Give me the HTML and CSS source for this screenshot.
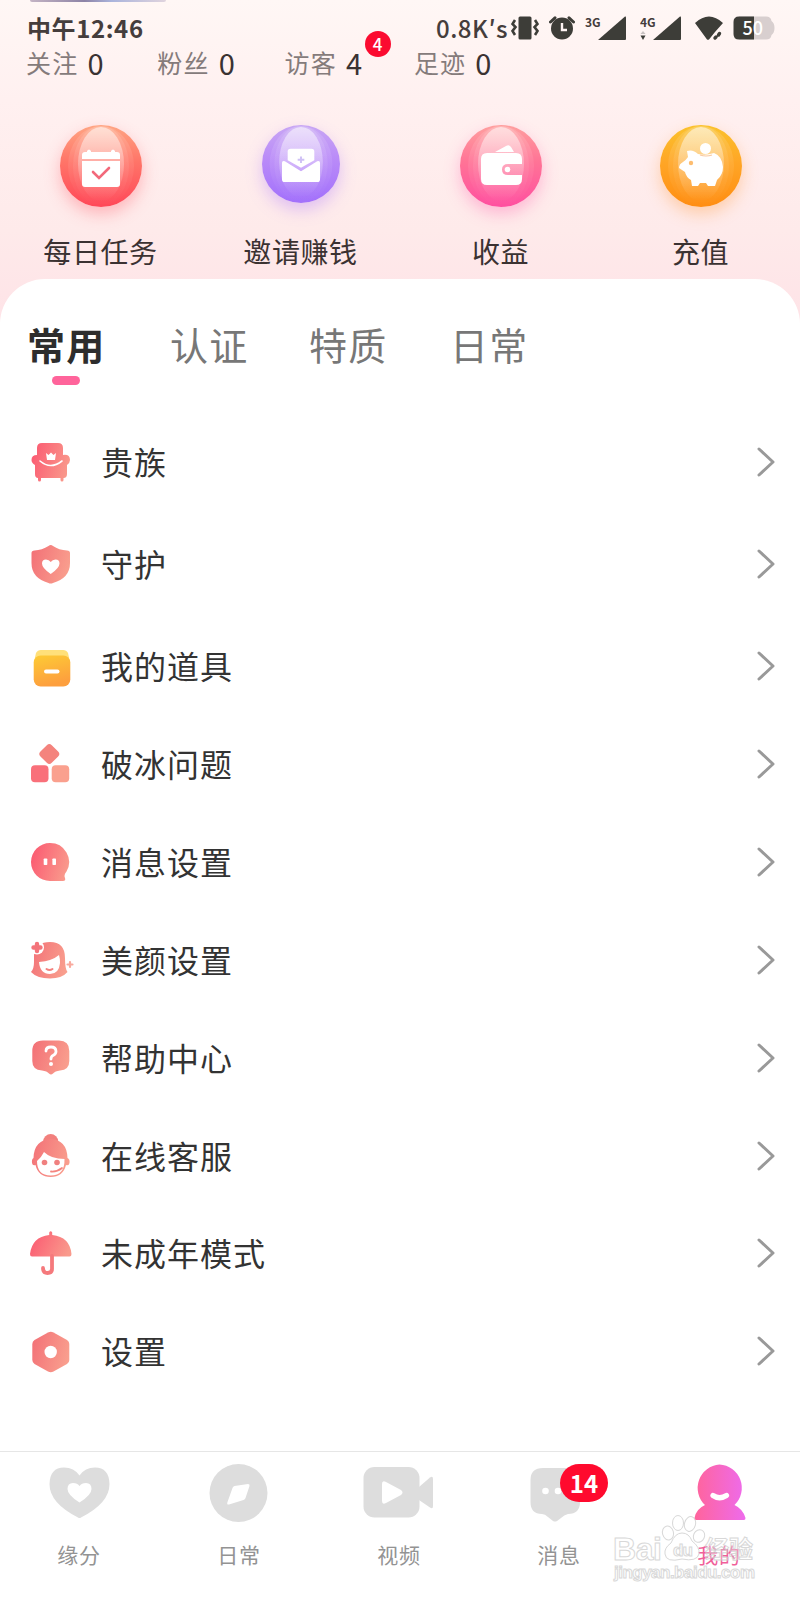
FILE: index.html
```
<!DOCTYPE html>
<html lang="zh-CN">
<head>
  <meta charset="UTF-8">
  <meta name="viewport" content="width=device-width, initial-scale=1.0">
  <title>我的</title>
  <link rel="stylesheet" href="styles.css">
</head>
<body>
  <!-- shared gradients and shapes -->
  <svg class="defs" width="0" height="0">
    <defs>
      <linearGradient id="rose" x1="0" y1="0.3" x2="1" y2="0.6">
        <stop offset="0" stop-color="#fb5b72"/>
        <stop offset="1" stop-color="#f99a8c"/>
      </linearGradient>
      <linearGradient id="coral" x1="0" y1="0.3" x2="1" y2="0.6">
        <stop offset="0" stop-color="#f37378"/>
        <stop offset="1" stop-color="#f99f8e"/>
      </linearGradient>
      <linearGradient id="gold" x1="0" y1="0" x2="0.3" y2="1">
        <stop offset="0" stop-color="#fdcb35"/>
        <stop offset="1" stop-color="#fd9f3e"/>
      </linearGradient>
      <linearGradient id="magenta" x1="0" y1="0" x2="1" y2="0">
        <stop offset="0" stop-color="#ff649b"/>
        <stop offset="1" stop-color="#ee6bec"/>
      </linearGradient>
      <linearGradient id="shine" x1="0" y1="0" x2="0" y2="1">
        <stop offset="0" stop-color="#fff" stop-opacity="0.55"/>
        <stop offset="0.5" stop-color="#fff" stop-opacity="0.28"/>
        <stop offset="1" stop-color="#fff" stop-opacity="0"/>
      </linearGradient>
      <g id="gloss">
        <ellipse cx="41" cy="41" rx="33" ry="40" fill="url(#shine)" opacity="0.25"/>
        <ellipse cx="41" cy="41" rx="28" ry="40" fill="url(#shine)" opacity="0.25"/>
        <ellipse cx="41" cy="39" rx="23" ry="37" fill="url(#shine)"/>
      </g>
    </defs>
  </svg>

  <div class="app">
    <header class="top">
      <div class="avatar-edge"></div>
      <div class="status-bar">
        <span class="time">中午12:46</span>
        <div class="status-icons">
          <span class="speed">0.8K′s</span>
          <svg class="vibrate" width="28" height="24" viewBox="0 0 28 24">
            <rect x="7.500" y="0.500" width="13" height="23" rx="1.500" fill="#3d3d38"/>
            <path d="M4 4L1.500 8L4.500 11L1.500 15L4 19M24 4L26.500 8L23.500 11L26.500 15L24 19" fill="none" stroke="#3d3d38" stroke-width="2.600"/>
          </svg>
          <svg class="alarm" width="26" height="24" viewBox="0 0 26 24">
            <circle cx="13" cy="12.500" r="11" fill="#3d3d38"/>
            <path d="M1.500 6L6 1.800M24.500 6L20 1.800" stroke="#3d3d38" stroke-width="3" stroke-linecap="round"/>
            <path d="M13 7V14H18" fill="none" stroke="#fff5f4" stroke-width="2.400"/>
          </svg>
          <svg class="signal" width="42" height="26" viewBox="0 0 42 26">
            <text x="0" y="12">3G</text>
            <path d="M13 25L40 1.500Q41 1 41 2.500V24Q41 25 40 25Z" fill="#3d3d38"/>
          </svg>
          <svg class="signal signal-4g" width="42" height="26" viewBox="0 0 42 26">
            <text x="0" y="12">4G</text>
            <path d="M0.500 19L3 16L5.500 19Z" fill="#c9c2c1"/>
            <path d="M0.500 20.500H5.500L3 25Z" fill="#3d3d38"/>
            <path d="M13 25L40 1.500Q41 1 41 2.500V24Q41 25 40 25Z" fill="#3d3d38"/>
          </svg>
          <svg class="wifi" width="30" height="26" viewBox="0 0 30 26">
            <path d="M1 8Q15 -5 29 8L21 17L15 24.500Q14 25 13 24.500Z" fill="#3d3d38"/>
            <path d="M20.500 23.500L25.500 18" stroke="#fff5f4" stroke-width="6"/>
            <path d="M21 23L22 22M24.500 20L25.500 18.500" stroke="#3d3d38" stroke-width="3.400" stroke-linecap="round"/>
          </svg>
          <svg class="battery" width="42" height="24" viewBox="0 0 42 24">
            <path d="M6 0.500H33Q38 0.500 38.500 5Q41.500 7 41.500 12T38.500 19Q38 23.500 33 23.500H6Z" fill="#d8cfcf"/>
            <path d="M21 0.500H6Q0.500 0.500 0.500 6V18Q0.500 23.500 6 23.500H21Z" fill="#3d3d38"/>
            <text x="9.500" y="18.500" class="battery-text">50</text>
          </svg>
        </div>
      </div>

      <div class="stats">
        <div class="stat">关注<b>0</b></div>
        <div class="stat">粉丝<b>0</b></div>
        <div class="stat">访客<b>4</b><span class="dot">4</span></div>
        <div class="stat">足迹<b>0</b></div>
      </div>

      <div class="shortcuts">
        <a class="shortcut">
          <div class="ball ball-red">
            <svg viewBox="0 0 82 82">
              <use href="#gloss"/>
              <path d="M22 34V30Q22 27 25 27H27V26Q29 23 31 26V27H51V26Q53 23 55 26V27H57Q60 27 60 30V34Z" fill="#fff"/>
              <path d="M22 36H60V59Q60 62 57 62H25Q22 62 22 59Z" fill="#fff"/>
              <path d="M33 47L39 53L49 43" fill="none" stroke="#f2697a" stroke-width="2.600" stroke-linecap="round"/>
            </svg>
          </div>
          <span>每日任务</span>
        </a>
        <a class="shortcut">
          <div class="ball ball-purple">
            <svg viewBox="0 0 82 82">
              <use href="#gloss"/>
              <path d="M27 37V28Q27 25 30 25H52Q55 25 55 28V37L41 45Z" fill="#fff"/>
              <path d="M21 40Q21 37 24 38L41 48.500L58 38Q61 37 61 40V57Q61 60 58 60H24Q21 60 21 57Z" fill="#fff"/>
              <path d="M41 33V40M37.500 36.500H44.500" stroke="#cfc0f5" stroke-width="2"/>
            </svg>
          </div>
          <span>邀请赚钱</span>
        </a>
        <a class="shortcut">
          <div class="ball ball-pink">
            <svg viewBox="0 0 82 82">
              <use href="#gloss"/>
              <path d="M35 27L46 21Q49 19 51 22L54 27Z" fill="#fff"/>
              <path d="M27 28H56Q62 28 62 34V39H48Q42 39 42 44.500T48 50H62V54Q62 60 56 60H27Q21 60 21 54V34Q21 28 27 28Z" fill="#fff"/>
              <circle cx="47.500" cy="44.500" r="2.800" fill="#fff"/>
            </svg>
          </div>
          <span>收益</span>
        </a>
        <a class="shortcut">
          <div class="ball ball-orange">
            <svg viewBox="0 0 82 82">
              <use href="#gloss"/>
              <circle cx="45.500" cy="23.500" r="5.500" fill="#fff"/>
              <path d="M27 26Q33 24 38 29Q45 31 54 28Q62 31 63 42Q63 50 57 55L55 61H48L46 58H40L38 61H32L31 55Q26 52 25 47L19 43Q19 39 23 37Q26 35 28 32Z" fill="#fff"/>
              <path d="M40 30Q46 32 52 30" fill="none" stroke="#f9c9a0" stroke-width="1.200"/>
              <circle cx="31" cy="38" r="2.200" fill="#fdbd70"/>
            </svg>
          </div>
          <span>充值</span>
        </a>
      </div>
    </header>

    <main class="panel">
      <nav class="tabs">
        <a class="tab active">常用</a>
        <a class="tab">认证</a>
        <a class="tab">特质</a>
        <a class="tab">日常</a>
      </nav>

      <ul class="menu">
        <li class="tall">
          <svg class="icon" viewBox="0 0 44 44">
            <path d="M8 15V8Q8 3 13 3H29Q34 3 34 8V15Q41 14 41 20Q41 23 38 25V34Q38 38 34.500 38V40Q34.500 41.500 33 41.500T31.500 40V38H12V40Q12 41.500 10.500 41.500T9 40V38Q6 38 6 34V25Q2.500 23 2.500 20Q2.500 15 8 15Z" fill="url(#rose)"/>
            <path d="M17 13L19.500 15L22 12.500L24.500 15L27 13L26 20H18Z" fill="#fff"/>
            <path d="M11 21Q21.500 30 33 21" fill="none" stroke="#fff" stroke-width="1.600" stroke-linecap="round"/>
          </svg>
          <span>贵族</span>
          <svg class="arrow" viewBox="0 0 18 30"><path d="M2 2L16 15L2 28"/></svg>
        </li>
        <li class="tall">
          <svg class="icon" viewBox="0 0 44 44">
            <path d="M19.500 4Q21.700 2 24 4Q30 8 38 8.500Q41 8.500 41 11V21Q41 36 24 41Q21.700 42 19.500 41Q2.500 36 2.500 21V11Q2.500 8.500 5.500 8.500Q13 8 19.500 4Z" fill="url(#coral)"/>
            <path d="M21.700 32Q13 26 13 21.500Q13 17.500 17 17.500Q20 17.500 21.700 20Q23.500 17.500 26.500 17.500Q30.500 17.500 30.500 21.500Q30.500 26 21.700 32Z" fill="#fff"/>
          </svg>
          <span>守护</span>
          <svg class="arrow" viewBox="0 0 18 30"><path d="M2 2L16 15L2 28"/></svg>
        </li>
        <li class="props">
          <svg class="icon" viewBox="0 0 44 44">
            <path d="M12 6H34Q37.500 6 39 9L41 18H5L7 9Q8.500 6 12 6Z" fill="#ffe07a"/>
            <rect x="4.700" y="11.500" width="36.600" height="31" rx="7" fill="url(#gold)"/>
            <rect x="15" y="25.500" width="15.500" height="4" rx="2" fill="#fff"/>
          </svg>
          <span>我的道具</span>
          <svg class="arrow" viewBox="0 0 18 30"><path d="M2 2L16 15L2 28"/></svg>
        </li>
        <li>
          <svg class="icon" viewBox="0 0 44 44">
            <rect x="12.300" y="4" width="16" height="16" rx="3.500" transform="rotate(45 20.300 12)" fill="#f4837d"/>
            <rect x="2" y="23.300" width="17.500" height="17" rx="4" fill="#f9707a"/>
            <rect x="22.700" y="23.300" width="17.500" height="17" rx="4" fill="#faa08e"/>
          </svg>
          <span>破冰问题</span>
          <svg class="arrow" viewBox="0 0 18 30"><path d="M2 2L16 15L2 28"/></svg>
        </li>
        <li>
          <svg class="icon" viewBox="0 0 44 44">
            <path d="M21 3A19 19 0 0 1 37.500 31.500Q34.500 35 36 38Q37 41 34 41H21A19 19 0 0 1 21 3Z" fill="url(#rose)"/>
            <rect x="14.700" y="18.500" width="3.600" height="6.500" rx="0.800" fill="#fff"/>
            <rect x="23.400" y="18.500" width="3.600" height="6.500" rx="0.800" fill="#fff"/>
          </svg>
          <span>消息设置</span>
          <svg class="arrow" viewBox="0 0 18 30"><path d="M2 2L16 15L2 28"/></svg>
        </li>
        <li>
          <svg class="icon" viewBox="0 0 44 44">
            <path d="M21 4Q36 4 36 20Q36 31 38.500 34Q33 40.500 21 40.500Q8 40.500 2 34Q5 31 5 24V17Q7 4 21 4Z" fill="url(#coral)"/>
            <path d="M10 24Q23 23 30 17Q31 20 31 25Q30 36 21 36Q11 36 10 24Z" fill="#fff"/>
            <path d="M17.500 31Q20.500 33 23.500 31" fill="none" stroke="#f4817e" stroke-width="2" stroke-linecap="round"/>
            <circle cx="8" cy="9.500" r="7" fill="#fff"/>
            <path d="M8 6V13M4.500 9.500H11.500" stroke="#f3747a" stroke-width="4.400" stroke-linecap="round"/>
            <path d="M41 24V29M38.500 26.500H43.500" stroke="#f9aa9e" stroke-width="2.200" stroke-linecap="round"/>
          </svg>
          <span>美颜设置</span>
          <svg class="arrow" viewBox="0 0 18 30"><path d="M2 2L16 15L2 28"/></svg>
        </li>
        <li>
          <svg class="icon" viewBox="0 0 44 44">
            <path d="M14 4.500H30Q40.300 4.500 40.300 15V25Q40.300 34 31 34.500Q26 35 24 37.500Q22 39.500 20 37.500Q18 35 13 34.500Q3.300 34 3.300 25V15Q3.300 4.500 14 4.500Z" fill="url(#coral)"/>
            <path d="M17 15Q17 11 22 11T27 15.500Q27 18 24 19.500Q22 20.500 22 23" fill="none" stroke="#fff" stroke-width="2.800" stroke-linecap="round"/>
            <circle cx="22" cy="28" r="2" fill="#fff"/>
          </svg>
          <span>帮助中心</span>
          <svg class="arrow" viewBox="0 0 18 30"><path d="M2 2L16 15L2 28"/></svg>
        </li>
        <li>
          <svg class="icon" viewBox="0 0 44 44">
            <circle cx="21.700" cy="7.500" r="7.500" fill="#f2807d"/>
            <path d="M21.700 5Q38 6 38.500 24Q41 25 40.500 29Q40 32 37 31Q34 43 21.700 43T6.500 31Q3.500 32 3 29Q2.500 25 4.500 24Q5 6 21.700 5Z" fill="url(#coral)"/>
            <path d="M15 18Q22 25 35.500 25Q36 41.500 21.700 41.500Q8 41.500 8 27Q12 24 15 18Z" fill="#fff"/>
            <circle cx="15.500" cy="28.500" r="2.800" fill="#f0807f"/>
            <circle cx="28" cy="28.500" r="2.800" fill="#f0807f"/>
            <path d="M22 37.500Q28 38 33 34" fill="none" stroke="#f4857f" stroke-width="1.800" stroke-linecap="round"/>
          </svg>
          <span>在线客服</span>
          <svg class="arrow" viewBox="0 0 18 30"><path d="M2 2L16 15L2 28"/></svg>
        </li>
        <li>
          <svg class="icon" viewBox="0 0 44 44">
            <path d="M20.200 4V1.500Q21.700 -1 23.200 1.500V4Q41 6 42.500 23Q42.500 25.500 40.500 25.500H3Q1 25.500 1 23Q3 6 20.200 4Z" fill="url(#rose)"/>
            <path d="M23 25V38Q23 42 18.500 42T14 37" fill="none" stroke="#f5797c" stroke-width="3.800" stroke-linecap="round"/>
          </svg>
          <span>未成年模式</span>
          <svg class="arrow" viewBox="0 0 18 30"><path d="M2 2L16 15L2 28"/></svg>
        </li>
        <li>
          <svg class="icon" viewBox="0 0 44 44">
            <path d="M19 3.500Q21.700 2 24.500 3.500L38 11Q40.300 12.500 40.300 15V31Q40.300 33.500 38 35L24.500 42.500Q21.700 44 19 42.500L5.500 35Q3.300 33.500 3.300 31V15Q3.300 12.500 5.500 11Z" fill="url(#coral)"/>
            <circle cx="21.700" cy="23" r="6.200" fill="#fff"/>
          </svg>
          <span>设置</span>
          <svg class="arrow" viewBox="0 0 18 30"><path d="M2 2L16 15L2 28"/></svg>
        </li>
      </ul>
    </main>

    <footer class="tabbar">
      <a class="tabbar-item">
        <svg width="74" height="60" viewBox="0 0 74 60">
          <path d="M35 53.500Q6.500 39 6.500 20Q7 3.500 21 3.500Q31 3.500 36.500 11.500Q42 3.500 52 3.500Q66 3.500 66.500 20Q66.500 39 38 53.500Q36.500 54.500 35 53.500Z" fill="#ddd"/>
          <path d="M36.500 38.500Q24.500 31 24.500 25Q24.500 19 30 19Q34.500 19 36.500 22Q38.500 19 43 19Q48.500 19 48.500 25Q48.500 31 36.500 38.500Z" fill="#fff"/>
        </svg>
        <span>缘分</span>
      </a>
      <a class="tabbar-item">
        <svg width="74" height="60" viewBox="0 0 74 60">
          <circle cx="35.500" cy="29" r="29" fill="#ddd"/>
          <path d="M29.500 24Q30 22.500 31.500 22L45 20Q47 20 46.500 22L42.500 34Q42 35.500 40.500 36L26 40.500Q23.500 41 24.500 38Z" fill="#fff"/>
        </svg>
        <span>日常</span>
      </a>
      <a class="tabbar-item">
        <svg width="74" height="60" viewBox="0 0 74 60">
          <rect x="0.500" y="3" width="56" height="50.500" rx="11" fill="#ddd"/>
          <path d="M56 23L67 13.500Q70 11.500 70 15V42Q70 45.500 67 43.500L56 36Z" fill="#ddd"/>
          <path d="M19 20Q19 16 23 18L38 26Q41 28.500 38 31L23 39Q19 41 19 37Z" fill="#fff"/>
        </svg>
        <span>视频</span>
      </a>
      <a class="tabbar-item">
        <svg width="74" height="60" viewBox="0 0 74 60">
          <path d="M20 4H45Q57 4 57 16V38Q57 50 45 50Q41 51 38 54L34 57Q32 58 30 57L25 53Q22 50 19 50Q7.500 50 7.500 38V16Q7.500 4 20 4Z" fill="#ddd"/>
          <circle cx="22.500" cy="27" r="3.300" fill="#fff"/>
          <circle cx="35" cy="27" r="3.300" fill="#fff"/>
        </svg>
        <span>消息</span>
        <i class="count">14</i>
      </a>
      <a class="tabbar-item current">
        <svg width="74" height="60" viewBox="0 0 74 60">
          <path d="M36.500 0.500A23.500 23.500 0 0 1 51.500 41Q60 45 62.500 54Q62.500 56 61 56H13Q11 56 11.500 54Q13 45 22 41A23.500 23.500 0 0 1 36.500 0.500Z" fill="url(#magenta)"/>
          <path d="M30 31.500Q36.500 36 43.500 31.500" fill="none" stroke="#fff" stroke-width="5.200" stroke-linecap="round"/>
        </svg>
        <span>我的</span>
      </a>

      <svg class="watermark" width="160" height="80" viewBox="0 0 160 80">
        <g fill="#fff" stroke="#cfcfcf" stroke-width="1">
          <ellipse cx="67" cy="27" rx="5.500" ry="7" transform="rotate(-15 67 27)"/>
          <ellipse cx="77" cy="17" rx="5.500" ry="7.500"/>
          <ellipse cx="89" cy="18" rx="5.500" ry="7.500" transform="rotate(15 89 18)"/>
          <ellipse cx="98" cy="30" rx="5.500" ry="6.500" transform="rotate(25 98 30)"/>
          <path d="M81 27Q88 27 91 35Q99 41 98 48Q96 56 81 53Q65 57 64 48Q63 42 70 37Q74 27 81 27Z"/>
          <text x="12" y="54" class="wm-latin" textLength="49">Bai</text>
          <text x="72" y="50" class="wm-du" textLength="20">du</text>
          <text x="104" y="52" class="wm-cjk">经验</text>
          <text x="13" y="72" class="wm-url" textLength="141">jingyan.baidu.com</text>
        </g>
      </svg>
    </footer>
  </div>
</body>
</html>
```
FILE: styles.css
```
* {
  box-sizing: border-box;
}

body {
  margin: 0;
  background: #fff;
  color: #333;
  font-family: 'Noto Sans CJK SC', 'Noto Sans', sans-serif;
}

.defs {
  position: absolute;
}

.app {
  display: flex;
  flex-direction: column;
  width: 800px;
  height: 1600px;
  overflow: hidden;
  background: linear-gradient(#fff7f5 0, #fff0f0 100px, #feeaea 230px, #fee3e7 320px);
}

.top {
  height: 279px;
}

.avatar-edge {
  width: 136px;
  height: 2px;
  margin-left: 30px;
  border-radius: 0 0 3px 3px;
  background: linear-gradient(90deg, #c4b4c4, #8d83a6 40%, #aab4dc 60%, #e0d4de);
}

/* status bar */
.status-bar {
  display: flex;
  justify-content: space-between;
  align-items: center;
  height: 50px;
  padding: 2px 25px 0 27px;
}

.time {
  font-size: 24px;
  font-weight: bold;
  line-height: 48px;
  color: #453d3c;
  letter-spacing: 0.6px;
}

.status-icons {
  display: flex;
  align-items: center;
}

.speed {
  width: 75px;
  font-size: 24px;
  font-weight: 500;
  line-height: 48px;
  letter-spacing: 0.5px;
  color: #453d3c;
  white-space: nowrap;
}

.alarm {
  margin-left: 10px;
}

.signal {
  margin-left: 10px;
}

.signal-4g {
  margin-left: 13px;
}

.signal text {
  font-size: 12px;
  font-weight: bold;
  fill: #453d3c;
}

.wifi {
  margin-left: 12px;
}

.battery {
  margin-left: 9px;
}

.battery-text {
  font-size: 18px;
  font-weight: 500;
  fill: #fff;
}

/* follow / fans / visitors */
.stats {
  display: flex;
  height: 24px;
  margin-top: -2px;
  padding-left: 26px;
}

.stat {
  position: relative;
  display: flex;
  align-items: center;
  width: 129.3px;
  font-size: 25px;
  line-height: 24px;
  letter-spacing: 1.2px;
  color: #857b7b;
}

.stat:nth-child(2) {
  padding-left: 2px;
}

.stat b {
  margin-left: 9px;
  font-size: 29px;
  font-weight: normal;
  color: #3a3232;
}

.stat .dot {
  position: absolute;
  left: 80px;
  top: -19px;
  width: 26px;
  height: 26px;
  border-radius: 50%;
  background: #fb0b30;
  color: #fff;
  font-size: 17px;
  font-weight: 500;
  line-height: 25px;
  letter-spacing: 0;
  text-align: center;
}

/* round shortcuts */
.shortcuts {
  display: flex;
  padding: 51px 0 0;
}

.shortcut {
  display: flex;
  flex-direction: column;
  align-items: center;
  width: 200px;
  padding-left: 1px;
}

.shortcut span {
  margin-top: 24px;
  font-size: 28px;
  line-height: 40px;
  letter-spacing: 0.6px;
  color: #3b3232;
}

.ball {
  width: 82px;
  height: 82px;
  border-radius: 50%;
}

.ball svg {
  display: block;
}

.ball-red {
  background: linear-gradient(#ffa583, #ff7468 45%, #ff4758);
  box-shadow: 0 7px 16px rgba(255, 80, 95, 0.35);
}

.ball-purple {
  width: 78px;
  height: 78px;
  margin-bottom: 4px;
  background: linear-gradient(#c8a6f4, #b98af8 45%, #a270fb);
  box-shadow: 0 7px 16px rgba(165, 110, 255, 0.35);
}

.ball-pink {
  background: linear-gradient(#ff9f9f, #ff7396 45%, #ff4fa0);
  box-shadow: 0 7px 16px rgba(255, 85, 165, 0.35);
}

.ball-orange {
  background: linear-gradient(#fbc22c, #ffa626 45%, #ff8d12);
  box-shadow: 0 7px 16px rgba(255, 150, 50, 0.35);
}

/* white panel */
.panel {
  flex: 1;
  border-radius: 45px 45px 0 0;
  background: #fff;
}

.tabs {
  display: flex;
  height: 132px;
  padding: 38px 0 0 27px;
}

.tab {
  width: 141px;
  font-size: 38px;
  line-height: 54px;
  letter-spacing: 1.2px;
  color: #777;
}

.tab:nth-child(2) {
  padding-left: 2px;
}

.tab.active {
  font-weight: bold;
  color: #2d2d2d;
}

.tab.active::after {
  content: "";
  display: block;
  width: 28px;
  height: 9px;
  margin: 5px 0 0 25px;
  border-radius: 5px;
  background: #ff649b;
}

.menu {
  margin: 0;
  padding: 0;
  list-style: none;
}

.menu li {
  display: flex;
  align-items: center;
  height: 97.8px;
  padding: 0 25px 0 29px;
}

.menu .tall {
  height: 102.3px;
}

.menu .props {
  height: 100px;
}

.menu span {
  flex: 1;
  margin: -2px 0 0 28px;
  font-size: 32px;
  line-height: 46px;
  letter-spacing: 1px;
  color: #333;
}

.icon {
  width: 44px;
  height: 44px;
  overflow: visible;
}

.arrow {
  width: 18px;
  height: 30px;
}

.arrow path {
  fill: none;
  stroke: #999;
  stroke-width: 3;
  stroke-linecap: round;
  stroke-linejoin: round;
}

/* bottom bar */
.tabbar {
  position: relative;
  display: flex;
  height: 149px;
  border-top: 1px solid #e6e6e6;
  background: #fff;
}

.tabbar-item {
  position: relative;
  display: flex;
  flex-direction: column;
  align-items: center;
  width: 160px;
  padding-top: 12px;
}

.tabbar-item svg {
  overflow: visible;
}

.tabbar-item span {
  margin-top: 15px;
  margin-right: 2px;
  font-size: 21px;
  line-height: 30px;
  letter-spacing: 0.8px;
  color: #939393;
}

.tabbar-item.current span {
  color: #f0609a;
}

.count {
  position: absolute;
  left: 80px;
  top: 12px;
  width: 48px;
  height: 38px;
  border-radius: 19px;
  background: #ff0a2e;
  color: #fff;
  font-size: 24px;
  font-style: normal;
  font-weight: bold;
  line-height: 37px;
  text-align: center;
}

.watermark {
  position: absolute;
  left: 601px;
  top: 54px;
  opacity: 0.8;
}

.watermark text {
  font-family: 'Liberation Sans', 'Noto Sans CJK SC', sans-serif;
  font-weight: bold;
}

.wm-latin {
  font-size: 32px;
}

.wm-du {
  font-size: 17px;
}

.wm-cjk {
  font-size: 24px;
  fill-opacity: 0.4;
}

.wm-url {
  font-size: 17px;
}
```
